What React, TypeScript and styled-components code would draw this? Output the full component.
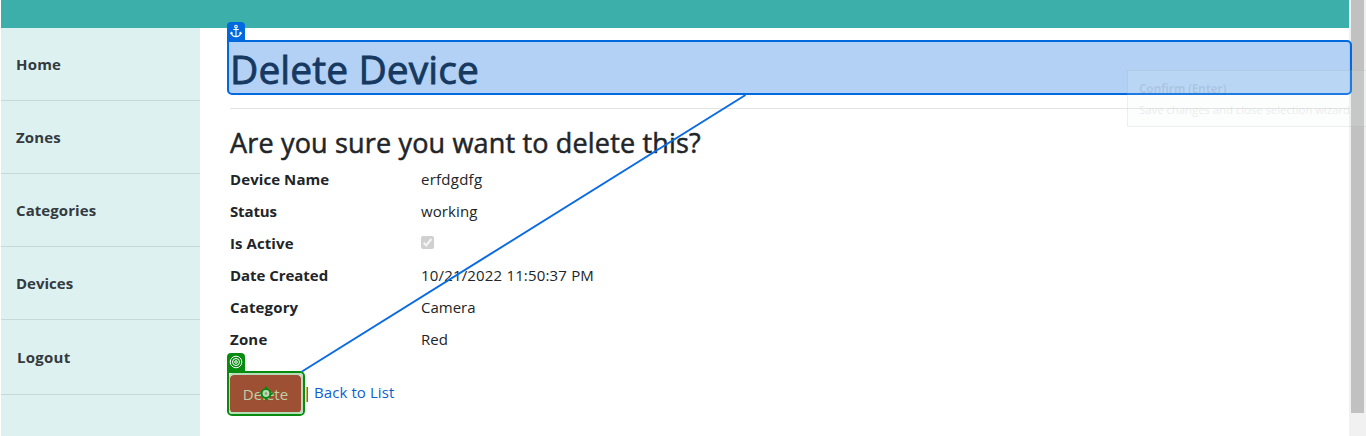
import React from "react";
import styled, { createGlobalStyle } from "styled-components";

const GlobalStyle = createGlobalStyle`
  * { box-sizing: border-box; }
  body {
    margin: 0;
    background: #fff;
    color: #212529;
    font-family: "Segoe UI", "Open Sans", "Noto Sans", sans-serif;
    font-size: 15px;
    line-height: 24px;
    overflow: hidden;
  }
`;

const Screen = styled.div`
  position: relative;
  display: flex;
  width: 1366px;
  height: 436px;
  overflow: hidden;
  padding-left: 1px;
`;

const Page = styled.div`
  display: flex;
  flex-direction: column;
  width: 1348px;
`;

const TopBar = styled.header`
  height: 28px;
  flex: none;
  background: #3cafaa;
`;

const Body = styled.div`
  display: flex;
  flex: 1;
`;

const Sidebar = styled.nav`
  width: 199px;
  background: #ddf2f0;
`;

const NavItem = styled.a<{ $last?: boolean }>`
  display: flex;
  align-items: center;
  height: ${(p) => (p.$last ? 75 : 73)}px;
  padding-left: ${(p) => (p.$last ? 16 : 15)}px;
  border-bottom: 1px solid #c5d9d8;
  color: #343a40;
  font-weight: 700;
`;

const Fit = styled.span<{ $ls: number }>`
  letter-spacing: ${(p) => p.$ls}px;
  white-space: nowrap;
`;

const Main = styled.main`
  flex: 1;
  padding: 17px 0 0 30px;
`;

const Title = styled.h1`
  margin: 0;
  font-size: 39px;
  line-height: 48px;
  font-weight: 500;
  -webkit-text-stroke: 0.8px currentColor;
`;

const Rule = styled.hr`
  margin: 15px 0 17px;
  border: 0;
  height: 1px;
  background: #e4e4e5;
`;

const Question = styled.h3`
  margin: 0 0 7px;
  font-size: 27px;
  line-height: 34px;
  font-weight: 500;
  -webkit-text-stroke: 0.5px currentColor;
`;

const Details = styled.dl`
  display: grid;
  grid-template-columns: 191px 1fr;
  grid-auto-rows: 24px;
  row-gap: 8px;
  margin: 0;
`;

const Term = styled.dt`
  font-weight: 700;
`;

const Value = styled.dd`
  display: flex;
  align-items: center;
  margin: 0;
`;

const CheckBox = styled.span`
  display: flex;
  width: 13px;
  height: 13px;
  margin-top: -1px;
  border-radius: 2px;
  background: #d0d0d0;
`;

const Actions = styled.div`
  display: flex;
  align-items: center;
  height: 38px;
  margin-top: 24px;
`;

const DeleteButton = styled.button`
  width: 71px;
  height: 38px;
  margin: 0 2px 0 0;
  padding: 0;
  border: 0;
  border-radius: 4px;
  background: #9e5034;
  color: #bfd0a9;
  font: inherit;
`;

const Separator = styled.span`
  width: 11px;
  margin-top: -4px;
  color: #212529;
`;

const BackLink = styled.a`
  margin-top: -4px;
  color: #0d5fd0;
`;

const ScrollTrack = styled.div`
  width: 17px;
  padding: 0 1px 0 2px;
  background: #f1f1f1;
`;

const ScrollThumb = styled.div`
  width: 13px;
  height: 413px;
  background: #c1c1c1;
`;

const AnchorFrame = styled.div`
  position: absolute;
  left: 227px;
  top: 40px;
  width: 1125px;
  height: 55px;
  border: 2px solid #0069e0;
  border-radius: 0 5px 5px 5px;
  background: rgba(0, 103, 222, 0.3);
`;

const TargetFrame = styled.div`
  position: absolute;
  left: 227px;
  top: 371px;
  width: 78px;
  height: 45px;
  border: 2px solid #078c10;
  border-radius: 0 5px 5px 5px;
`;

const TargetGap = styled.div`
  width: 100%;
  height: 100%;
  border: 2px solid #b5ddb7;
  border-left-width: 1px;
  border-radius: 4px;
`;

const Tag = styled.div<{ $color: string; $top: number }>`
  position: absolute;
  left: 227px;
  top: ${(p) => p.$top}px;
  display: flex;
  width: 18px;
  height: 19px;
  border-radius: 4px 4px 0 0;
  background: ${(p) => p.$color};
`;

const Overlay = styled.svg`
  position: absolute;
  left: 0;
  top: 0;
  pointer-events: none;
`;

const Tooltip = styled.div`
  position: absolute;
  left: 1127px;
  top: 70px;
  width: 260px;
  height: 57px;
  padding: 9px 0 0 11px;
  border: 1px solid rgba(100, 115, 115, 0.11);
  background: rgba(228, 250, 238, 0.13);
  color: rgba(200, 200, 206, 0.36);
  font-size: 11.5px;
  line-height: 23px;
`;

const TooltipTitle = styled.div`
  color: rgba(60, 80, 110, 0.13);
  font-weight: 700;
  font-size: 12px;
  line-height: 18px;
`;

const nav: [string, number][] = [
  ["Home", 0.2],
  ["Zones", 0.15],
  ["Categories", 0.08],
  ["Devices", 0],
  ["Logout", 0.25],
];

const rows: [string, number, string, number][] = [
  ["Device Name", 0.08, "erfdgdfg", 0.25],
  ["Status", -0.15, "working", 0.1],
  ["Is Active", 0.08, "", 0],
  ["Date Created", -0.04, "10/21/2022 11:50:37 PM", 0.17],
  ["Category", 0.15, "Camera", 0],
  ["Zone", 0.2, "Red", 0],
];

export default function App() {
  return (
    <Screen>
      <GlobalStyle />
      <Page>
        <TopBar />
        <Body>
          <Sidebar>
            {nav.map(([label, ls], i) => (
              <NavItem key={label} $last={i === nav.length - 1}>
                <Fit $ls={ls}>{label}</Fit>
              </NavItem>
            ))}
          </Sidebar>
          <Main>
            <Title><Fit $ls={0.08}>Delete Device</Fit></Title>
            <Rule />
            <Question><Fit $ls={0.17}>Are you sure you want to delete this?</Fit></Question>
            <Details>
              {rows.map(([term, tls, value, vls]) => (
                <React.Fragment key={term}>
                  <Term><Fit $ls={tls}>{term}</Fit></Term>
                  <Value>
                    {value ? <Fit $ls={vls}>{value}</Fit> : (
                      <CheckBox>
                        <svg width="13" height="13" viewBox="0 0 13 13">
                          <path d="M2.6 6.8 5.2 9.4 10.4 3" fill="none" stroke="#f5f5f5" strokeWidth="2" />
                        </svg>
                      </CheckBox>
                    )}
                  </Value>
                </React.Fragment>
              ))}
            </Details>
            <Actions>
              <DeleteButton><Fit $ls={0}>Delete</Fit></DeleteButton>
              <Separator>|</Separator>
              <BackLink><Fit $ls={0.08}>Back to List</Fit></BackLink>
            </Actions>
          </Main>
        </Body>
      </Page>
      <ScrollTrack><ScrollThumb /></ScrollTrack>

      <AnchorFrame />
      <Tag $color="#0069e0" $top={22}>
        <svg width="18" height="19" viewBox="0 0 18 19" fill="none" stroke="#fff" strokeWidth="1.1">
          <circle cx="9" cy="4.5" r="1.3" />
          <path d="M9 6v8.6M6.2 7.5h5.6M4.300 10.600c.3 2.600 2 4 4.700 4s4.400-1.400 4.700-4M3.500 12l.8-1.700 1.500 1.100M14.500 12l-.8-1.700-1.500 1.100" />
        </svg>
      </Tag>
      <TargetFrame><TargetGap /></TargetFrame>
      <Tag $color="#078c10" $top={353}>
        <svg width="18" height="19" viewBox="0 0 18 19" fill="none" stroke="#fff" strokeWidth="1">
          <circle cx="9" cy="9" r="5.8" />
          <circle cx="9" cy="9" r="3.5" />
          <circle cx="9" cy="9" r="1.3" />
        </svg>
      </Tag>
      <Overlay width="1366" height="436" viewBox="0 0 1366 436" fill="none">
        <path d="M745.5 95 302 371.5" stroke="#0b6be2" strokeWidth="2" />
        <circle cx="266" cy="393.5" r="4.4" stroke="#07880f" strokeWidth="2" fill="#b5ddb7" />
        <path d="M266 386.500v3M266 397.500v3M259 393.500h3M270 393.500h3" stroke="#07880f" strokeWidth="1.6" />
        <circle cx="266" cy="393.5" r="1.3" fill="#a98f77" />
      </Overlay>
      <Tooltip>
        <TooltipTitle><Fit $ls={-0.33}>Confirm (Enter)</Fit></TooltipTitle>
        <Fit $ls={-0.1}>Save changes and close selection wizard.</Fit>
      </Tooltip>
    </Screen>
  );
}
